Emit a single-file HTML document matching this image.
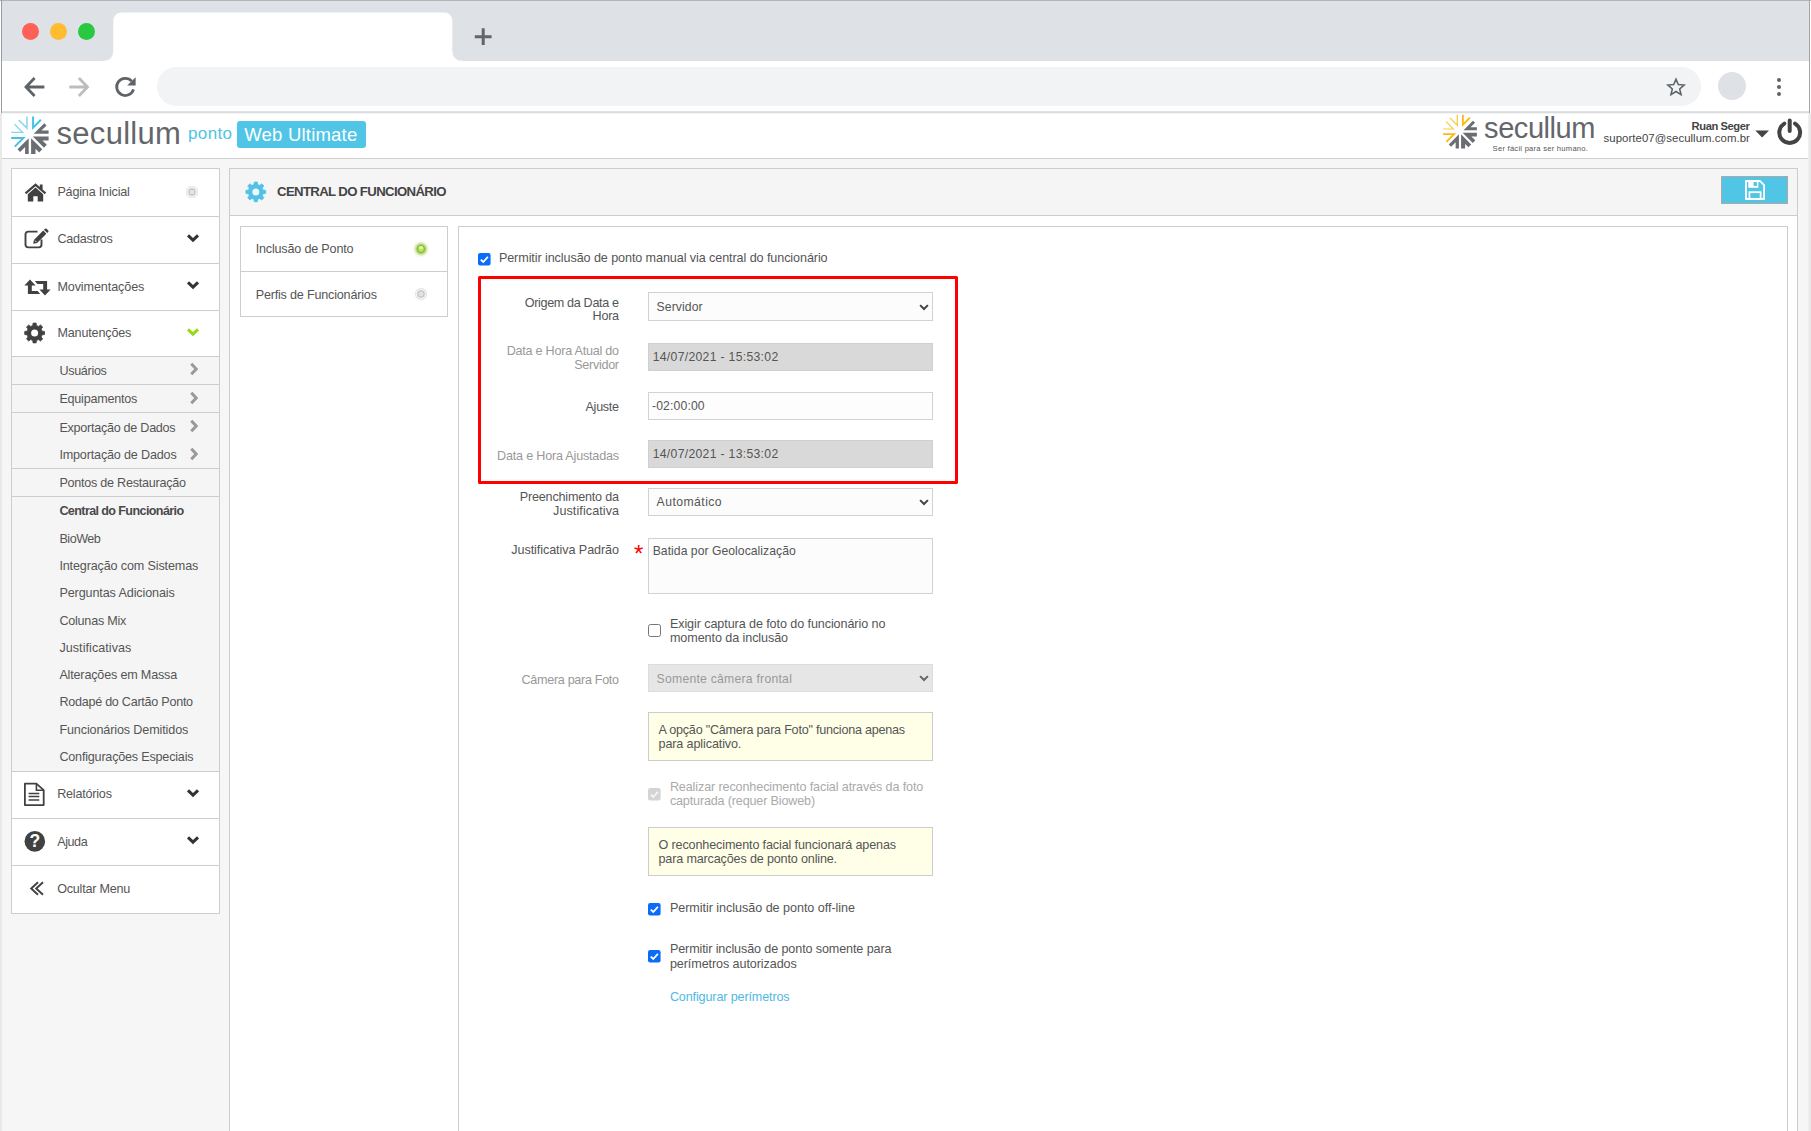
<!DOCTYPE html>
<html lang="pt-BR"><head><meta charset="utf-8"><title>Central do Funcionário</title>
<style>
html,body{margin:0;padding:0;}
body{width:1811px;height:1131px;position:relative;overflow:hidden;background:#fff;font-family:"Liberation Sans",sans-serif;}
.b{position:absolute;box-sizing:border-box;display:block;}
.t{position:absolute;white-space:nowrap;margin:0;padding:0;}
</style></head><body>
<div class="b" style="left:0px;top:0px;width:1811px;height:1131px;background:#fff;"></div>
<div class="b" style="left:2px;top:113px;width:1806px;height:1018px;background:#f6f6f6;"></div>
<div class="b" style="left:0px;top:113px;width:2px;height:1018px;background:#e9e9e9;"></div>
<div class="b" style="left:1808px;top:113px;width:1px;height:1018px;background:#f0f0f0;"></div>
<div class="b" style="left:1809px;top:113px;width:2px;height:1018px;background:#e9e9e9;"></div>
<div class="b" style="left:2px;top:1px;width:1807px;height:60px;background:#dee1e6;"></div>
<div class="b" style="left:0px;top:0px;width:1811px;height:1px;background:#b3b5b9;"></div>
<div class="b" style="left:1px;top:0px;width:1px;height:113px;background:#9a9c9f;"></div>
<div class="b" style="left:1809px;top:0px;width:1px;height:113px;background:#a2a4a8;"></div>
<svg class="b" style="left:100px;top:12px" width="370" height="49" viewBox="100 12 370 49"><path d="M103.3 60.8 Q113.3 60.8 113.3 50.8 L113.3 21.4 Q113.3 12.4 122.3 12.4 L443.3 12.4 Q452.3 12.4 452.3 21.4 L452.3 50.8 Q452.3 60.8 462.3 60.8 L462.3 61 L103.3 61 Z" fill="#fff"/></svg>
<svg class="b" style="left:470px;top:24px" width="26" height="26" viewBox="470 24 26 26"><path d="M483.2 28.3V45M474.8 36.65H491.6" stroke="#62666b" stroke-width="3" fill="none"/></svg>
<div class="b" style="left:22px;top:22.5px;width:17px;height:17px;border-radius:50%;background:#fe5f57;"></div>
<div class="b" style="left:50px;top:22.5px;width:17px;height:17px;border-radius:50%;background:#febc2e;"></div>
<div class="b" style="left:78px;top:22.5px;width:17px;height:17px;border-radius:50%;background:#28c840;"></div>
<div class="b" style="left:2px;top:61px;width:1807px;height:51px;background:#fff;"></div>
<div class="b" style="left:2px;top:111px;width:1807px;height:2px;background:linear-gradient(#e4e6e9,#d4d7db);"></div>
<svg class="b" style="left:20px;top:72px" width="125" height="30" viewBox="20 72 125 30"><path d="M44.4 87H26.6M34.6 78L26 87L34.6 96" stroke="#5f6368" stroke-width="2.8" fill="none"/><path d="M69.3 87H87M78.9 78L87.5 87L78.9 96" stroke="#bbbdbf" stroke-width="2.8" fill="none"/><path d="M131.69 81.15A8.6 8.6 0 1 0 133.52 89.41" stroke="#5f6368" stroke-width="2.8" fill="none"/><path d="M135.6 77.2V85.4H127.2Z" fill="#5f6368"/></svg>
<div class="b" style="left:157px;top:67px;width:1544px;height:39px;background:#f1f3f4;border-radius:19.5px;"></div>
<svg class="b" style="left:1665.2px;top:76px;" width="22" height="22" viewBox="0 0 22 22"><path transform="translate(11 11.3) scale(0.92) translate(-11 -11.3)" d="M11 2.6L13.5 8.4L19.8 8.9L15 13.1L16.5 19.2L11 15.9L5.5 19.2L7 13.1L2.2 8.9L8.5 8.4Z" stroke="#5f6368" stroke-width="1.7" fill="none" stroke-linejoin="miter"/></svg>
<div class="b" style="left:1717.5px;top:72px;width:28px;height:28px;border-radius:50%;background:#dee1e6;"></div>
<div class="b" style="left:1777px;top:78.0px;width:4.2px;height:4.2px;border-radius:50%;background:#5f6368;"></div>
<div class="b" style="left:1777px;top:84.80000000000001px;width:4.2px;height:4.2px;border-radius:50%;background:#5f6368;"></div>
<div class="b" style="left:1777px;top:91.60000000000001px;width:4.2px;height:4.2px;border-radius:50%;background:#5f6368;"></div>
<div class="b" style="left:2px;top:113.5px;width:1806px;height:45px;background:#fff;"></div>
<div class="b" style="left:2px;top:158px;width:1806px;height:1px;background:#cfcfcf;"></div>
<svg class="b" style="left:0;top:113px" width="60" height="45" viewBox="0 113 60 45"><path d="M32.10 129.99L32.10 116.60L34.10 116.60L34.10 125.16L40.15 119.11L41.57 120.52Z" fill="#45c1e6"/><path d="M33.76 133.70L44.25 123.21L46.52 125.47L41.49 130.50L48.60 130.50L48.60 133.70Z" fill="#6a6d71"/><path d="M32.80 136.50L48.60 136.50L48.60 140.50L42.45 140.50L46.80 144.85L43.97 147.67Z" fill="#6a6d71"/><path d="M31.10 138.20L42.27 149.37L39.16 152.48L35.50 148.82L35.50 154.00L31.10 154.00Z" fill="#6a6d71"/><path d="M28.70 138.20L28.70 154.00L25.10 154.00L25.10 146.89L20.07 151.92L17.53 149.37Z" fill="#6a6d71"/><path d="M25.80 137.00L15.48 147.32L14.06 145.91L20.97 139.00L11.20 139.00L11.20 137.00Z" fill="#45c1e6"/><path d="M24.11 132.90L11.20 132.90L11.20 131.65L21.09 131.65L14.10 124.66L14.98 123.77Z" fill="#86d6ee"/><path d="M27.70 129.99L18.23 120.52L19.29 119.46L26.20 126.37L26.20 116.60L27.70 116.60Z" fill="#86d6ee"/></svg>
<div class="t" style="left:56.60px;top:111.76px;font-size:31px;line-height:43px;color:#63666a;letter-spacing:0.268px;">secullum</div>
<div class="t" style="left:188.00px;top:122.11px;font-size:17px;line-height:24px;color:#4fc3e6;letter-spacing:0.365px;">ponto</div>
<div class="b" style="left:237px;top:121px;width:129px;height:26.6px;background:#50c5e6;border-radius:3px;"></div>
<div class="t" style="left:244.30px;top:121.69px;font-size:18.5px;line-height:26px;color:#fff;letter-spacing:0.201px;">Web Ultimate</div>
<svg class="b" style="left:1436px;top:113px" width="50" height="45" viewBox="1436 113 50 45"><path d="M1461.99 126.90L1461.99 114.80L1463.80 114.80L1463.80 122.54L1469.27 117.07L1470.54 118.34Z" fill="#fdb813"/><path d="M1463.49 130.25L1472.97 120.77L1475.02 122.82L1470.47 127.36L1476.90 127.36L1476.90 130.25Z" fill="#6a6d71"/><path d="M1462.62 132.78L1476.90 132.78L1476.90 136.40L1471.35 136.40L1475.27 140.33L1472.72 142.88Z" fill="#6a6d71"/><path d="M1461.08 134.32L1471.18 144.42L1468.37 147.23L1465.06 143.92L1465.06 148.60L1461.08 148.60Z" fill="#6a6d71"/><path d="M1458.92 134.32L1458.92 148.60L1455.66 148.60L1455.66 142.17L1451.12 146.72L1448.82 144.42Z" fill="#6a6d71"/><path d="M1456.29 133.24L1446.96 142.56L1445.69 141.29L1451.93 135.04L1443.10 135.04L1443.10 133.24Z" fill="#fdb813"/><path d="M1454.76 129.53L1443.10 129.53L1443.10 128.40L1452.04 128.40L1445.72 122.08L1446.52 121.28Z" fill="#fdca45"/><path d="M1458.01 126.90L1449.46 118.34L1450.41 117.39L1456.66 123.63L1456.66 114.80L1458.01 114.80Z" fill="#fdca45"/></svg>
<div class="t" style="left:1484.10px;top:108.35px;font-size:29px;line-height:41px;color:#63666a;letter-spacing:-0.447px;">secullum</div>
<div class="t" style="left:1492.60px;top:142.61px;font-size:7.6px;line-height:11px;color:#555;letter-spacing:0.251px;">Ser fácil para ser humano.</div>
<div class="t" style="left:1691.60px;top:118.10px;font-size:11.2px;line-height:16px;color:#444;letter-spacing:-0.427px;font-weight:bold;">Ruan Seger</div>
<div class="t" style="left:1603.60px;top:130.31px;font-size:11.4px;line-height:16px;color:#444;letter-spacing:0.047px;">suporte07@secullum.com.br</div>
<svg class="b" style="left:1755px;top:130px;" width="15" height="8" viewBox="0 0 15 8"><path d="M0.3 0.6H14L7.15 7.4Z" fill="#444"/></svg>
<svg class="b" style="left:1775px;top:117px;" width="30" height="30" viewBox="0 0 30 30"><path d="M9.3 6.6A10.4 10.4 0 1 0 20.1 6.6" stroke="#444" stroke-width="4" fill="none" stroke-linecap="round"/><path d="M14.7 3.4V14" stroke="#444" stroke-width="4" stroke-linecap="round"/></svg>
<div class="b" style="left:11px;top:168px;width:209px;height:746px;background:#fff;border:1px solid #cdcdcd;"></div>
<div class="b" style="left:12px;top:357px;width:207px;height:414px;background:#f5f5f5;"></div>
<div class="b" style="left:12px;top:216px;width:207px;height:1px;background:#cdcdcd;"></div>
<div class="b" style="left:12px;top:263px;width:207px;height:1px;background:#cdcdcd;"></div>
<div class="b" style="left:12px;top:310px;width:207px;height:1px;background:#cdcdcd;"></div>
<div class="b" style="left:12px;top:356px;width:207px;height:1px;background:#cdcdcd;"></div>
<div class="b" style="left:12px;top:384px;width:207px;height:1px;background:#cdcdcd;"></div>
<div class="b" style="left:12px;top:412px;width:207px;height:1px;background:#cdcdcd;"></div>
<div class="b" style="left:12px;top:468px;width:207px;height:1px;background:#cdcdcd;"></div>
<div class="b" style="left:12px;top:496px;width:207px;height:1px;background:#cdcdcd;"></div>
<div class="b" style="left:12px;top:771px;width:207px;height:1px;background:#cdcdcd;"></div>
<div class="b" style="left:12px;top:818px;width:207px;height:1px;background:#cdcdcd;"></div>
<div class="b" style="left:12px;top:865px;width:207px;height:1px;background:#cdcdcd;"></div>
<div class="t" style="left:57.40px;top:183.17px;font-size:12.6px;line-height:18px;color:#555;letter-spacing:-0.188px;">Página Inicial</div>
<div class="t" style="left:57.40px;top:230.37px;font-size:12.6px;line-height:18px;color:#555;letter-spacing:-0.241px;">Cadastros</div>
<div class="t" style="left:57.40px;top:277.67px;font-size:12.6px;line-height:18px;color:#555;letter-spacing:-0.103px;">Movimentações</div>
<div class="t" style="left:57.40px;top:324.47px;font-size:12.6px;line-height:18px;color:#555;letter-spacing:-0.165px;">Manutenções</div>
<div class="b" style="left:185px;top:184.8px;width:14px;height:14px;border-radius:50%;background:radial-gradient(circle closest-side,#e4e4e4 0,#e2e2e2 2.2px,#b9b9b9 3.1px,#e9e9e9 4px,#f4f4f4 4.6px,#e3e3e3 5.4px,rgba(255,255,255,0) 6.6px);"></div>
<svg class="b" style="left:185.8px;top:232.89999999999998px;" width="14" height="10" viewBox="0 0 14 10"><path d="M2 2.4L7 7.2L12 2.4" stroke="#333" stroke-width="3" fill="none"/></svg>
<svg class="b" style="left:185.8px;top:280.2px;" width="14" height="10" viewBox="0 0 14 10"><path d="M2 2.4L7 7.2L12 2.4" stroke="#333" stroke-width="3" fill="none"/></svg>
<svg class="b" style="left:185.8px;top:327.0px;" width="14" height="10" viewBox="0 0 14 10"><path d="M2 2.4L7 7.2L12 2.4" stroke="#96d91a" stroke-width="3" fill="none"/></svg>
<div class="t" style="left:59.40px;top:361.97px;font-size:12.6px;line-height:18px;color:#555;letter-spacing:-0.317px;">Usuários</div>
<div class="t" style="left:59.40px;top:390.27px;font-size:12.6px;line-height:18px;color:#555;letter-spacing:-0.232px;">Equipamentos</div>
<div class="t" style="left:59.40px;top:418.97px;font-size:12.6px;line-height:18px;color:#555;letter-spacing:-0.271px;">Exportação de Dados</div>
<div class="t" style="left:59.40px;top:446.07px;font-size:12.6px;line-height:18px;color:#555;letter-spacing:-0.171px;">Importação de Dados</div>
<div class="t" style="left:59.40px;top:474.27px;font-size:12.6px;line-height:18px;color:#555;letter-spacing:-0.254px;">Pontos de Restauração</div>
<svg class="b" style="left:189px;top:362px;" width="10" height="14" viewBox="0 0 10 14"><path d="M2.3 1.8L7.2 7L2.3 12.2" stroke="#999" stroke-width="3" fill="none"/></svg>
<svg class="b" style="left:189px;top:390.5px;" width="10" height="14" viewBox="0 0 10 14"><path d="M2.3 1.8L7.2 7L2.3 12.2" stroke="#999" stroke-width="3" fill="none"/></svg>
<svg class="b" style="left:189px;top:419px;" width="10" height="14" viewBox="0 0 10 14"><path d="M2.3 1.8L7.2 7L2.3 12.2" stroke="#999" stroke-width="3" fill="none"/></svg>
<svg class="b" style="left:189px;top:446.5px;" width="10" height="14" viewBox="0 0 10 14"><path d="M2.3 1.8L7.2 7L2.3 12.2" stroke="#999" stroke-width="3" fill="none"/></svg>
<div class="t" style="left:59.40px;top:502.27px;font-size:12.6px;line-height:18px;color:#4a4a4a;letter-spacing:-0.624px;font-weight:bold;">Central do Funcionário</div>
<div class="t" style="left:59.40px;top:529.67px;font-size:12.6px;line-height:18px;color:#555;letter-spacing:-0.478px;">BioWeb</div>
<div class="t" style="left:59.40px;top:556.87px;font-size:12.6px;line-height:18px;color:#555;letter-spacing:-0.144px;">Integração com Sistemas</div>
<div class="t" style="left:59.40px;top:584.27px;font-size:12.6px;line-height:18px;color:#555;letter-spacing:-0.115px;">Perguntas Adicionais</div>
<div class="t" style="left:59.40px;top:611.77px;font-size:12.6px;line-height:18px;color:#555;letter-spacing:-0.233px;">Colunas Mix</div>
<div class="t" style="left:59.40px;top:638.77px;font-size:12.6px;line-height:18px;color:#555;letter-spacing:0.044px;">Justificativas</div>
<div class="t" style="left:59.40px;top:666.27px;font-size:12.6px;line-height:18px;color:#555;letter-spacing:-0.180px;">Alterações em Massa</div>
<div class="t" style="left:59.40px;top:693.27px;font-size:12.6px;line-height:18px;color:#555;letter-spacing:-0.267px;">Rodapé do Cartão Ponto</div>
<div class="t" style="left:59.40px;top:720.77px;font-size:12.6px;line-height:18px;color:#555;letter-spacing:-0.126px;">Funcionários Demitidos</div>
<div class="t" style="left:59.40px;top:748.27px;font-size:12.6px;line-height:18px;color:#555;letter-spacing:-0.203px;">Configurações Especiais</div>
<div class="t" style="left:57.20px;top:785.27px;font-size:12.6px;line-height:18px;color:#555;letter-spacing:-0.214px;">Relatórios</div>
<div class="t" style="left:57.20px;top:832.67px;font-size:12.6px;line-height:18px;color:#555;letter-spacing:-0.432px;">Ajuda</div>
<div class="t" style="left:57.20px;top:879.67px;font-size:12.6px;line-height:18px;color:#555;letter-spacing:-0.230px;">Ocultar Menu</div>
<svg class="b" style="left:185.8px;top:787.8000000000001px;" width="14" height="10" viewBox="0 0 14 10"><path d="M2 2.4L7 7.2L12 2.4" stroke="#333" stroke-width="3" fill="none"/></svg>
<svg class="b" style="left:185.8px;top:835.2px;" width="14" height="10" viewBox="0 0 14 10"><path d="M2 2.4L7 7.2L12 2.4" stroke="#333" stroke-width="3" fill="none"/></svg>
<svg class="b" style="left:24px;top:181.5px;" width="23" height="21" viewBox="0 0 23 21"><path d="M11.5 1.2L0.8 10.6L2.2 12.2L11.5 4.2L20.8 12.2L22.2 10.6L18.6 7.4V2.4H15.8V5Z" fill="#414141"/><path d="M11.5 5.6L3.8 12.2V19.6H9.3V14.2H13.7V19.6H19.2V12.2Z" fill="#414141"/></svg>
<svg class="b" style="left:24px;top:228px;" width="25" height="21" viewBox="0 0 25 21"><path d="M17.5 11.5V16.6Q17.5 19.4 14.7 19.4H4.3Q1.5 19.4 1.5 16.6V6.4Q1.5 3.6 4.3 3.6H13.5" stroke="#414141" stroke-width="1.9" fill="none"/><path d="M9.2 15.8L9.9 11.9L19.2 2.6L22.4 5.8L13.1 15.1Z" fill="#414141"/><path d="M20 1.8L21 0.8Q21.8 0 22.6 0.8L24.2 2.4Q25 3.2 24.2 4L23.2 5Z" fill="#414141"/><path d="M11 12.6L12.4 14" stroke="#fff" stroke-width="0.9"/></svg>
<svg class="b" style="left:24px;top:278.5px;" width="27" height="17" viewBox="0 0 27 17"><path d="M6 0.4L0.4 6.6H3.9V15H16.2L13.6 12H7.8V6.6H11.6Z" fill="#414141"/><path d="M21 16.6L26.6 10.4H23.1V2H10.8L13.4 5H19.2V10.4H15.4Z" fill="#414141"/></svg>
<svg class="b" style="left:20px;top:320px" width="28" height="26" viewBox="20 320 28 26"><path d="M32.80 325.51L33.04 323.12L36.16 323.12L36.40 325.51L38.62 326.43L40.48 324.91L42.69 327.12L41.17 328.98L42.09 331.20L44.48 331.44L44.48 334.56L42.09 334.80L41.17 337.02L42.69 338.88L40.48 341.09L38.62 339.57L36.40 340.49L36.16 342.88L33.04 342.88L32.80 340.49L30.58 339.57L28.72 341.09L26.51 338.88L28.03 337.02L27.11 334.80L24.72 334.56L24.72 331.44L27.11 331.20L28.03 328.98L26.51 327.12L28.72 324.91L30.58 326.43Z" fill="#414141" stroke="#414141" stroke-width="0.8" stroke-linejoin="round"/><circle cx="34.6" cy="333" r="3.5" fill="#fff"/></svg>
<svg class="b" style="left:23.4px;top:782px;" width="23" height="25" viewBox="0 0 23 25"><path d="M1.9 1.7H13.4L20.7 8.2V23.1H1.9Z" stroke="#414141" stroke-width="1.8" fill="none" stroke-linejoin="round"/><path d="M13.4 1.9V8.2H20.5" stroke="#414141" stroke-width="1.6" fill="none"/><path d="M5.6 11.4H16.3M5.6 14.6H16.3M5.6 17.9H16.3" stroke="#414141" stroke-width="1.5"/></svg>
<svg class="b" style="left:24px;top:831px" width="22" height="22" viewBox="0 0 22 22"><circle cx="10.8" cy="10.4" r="10.3" fill="#414141"/><text x="10.8" y="16.4" text-anchor="middle" font-family="Liberation Sans, sans-serif" font-weight="bold" font-size="17.5" fill="#fff">?</text></svg>
<svg class="b" style="left:29px;top:881px;" width="16" height="15" viewBox="0 0 16 15"><path d="M9 1.2L2.2 7.5L9 13.8M14 1.2L7.2 7.5L14 13.8" stroke="#414141" stroke-width="1.9" fill="none"/></svg>
<div class="b" style="left:229px;top:168px;width:1569px;height:980px;background:#fff;border:1px solid #cdcdcd;"></div>
<div class="b" style="left:230px;top:169px;width:1567px;height:46px;background:#f5f5f5;"></div>
<div class="b" style="left:230px;top:215px;width:1567px;height:1px;background:#cdcdcd;"></div>
<svg class="b" style="left:243px;top:179px" width="26" height="26" viewBox="243 179 26 26"><path d="M254.03 184.51L254.24 182.02L257.36 182.02L257.57 184.51L259.77 185.42L261.68 183.81L263.89 186.02L262.28 187.93L263.19 190.13L265.68 190.34L265.68 193.46L263.19 193.67L262.28 195.87L263.89 197.78L261.68 199.99L259.77 198.38L257.57 199.29L257.36 201.78L254.24 201.78L254.03 199.29L251.83 198.38L249.92 199.99L247.71 197.78L249.32 195.87L248.41 193.67L245.92 193.46L245.92 190.34L248.41 190.13L249.32 187.93L247.71 186.02L249.92 183.81L251.83 185.42Z" fill="#4fc3e6" stroke="#4fc3e6" stroke-width="0.8" stroke-linejoin="round"/><circle cx="255.8" cy="191.9" r="3.5" fill="#f5f5f5"/></svg>
<div class="t" style="left:277.00px;top:183.31px;font-size:13.2px;line-height:18px;color:#444;letter-spacing:-0.637px;font-weight:bold;">CENTRAL DO FUNCIONÁRIO</div>
<div class="b" style="left:1721px;top:176px;width:67px;height:28px;background:#50c5e6;border:1px solid #b0a8a5;"></div>
<svg class="b" style="left:1744.75px;top:179.9px" width="20.2" height="20.2" viewBox="0 0 20.2 20.2"><path d="M0.95 0.95H14.9L19.15 5.2V19.05H0.95Z" stroke="#fff" stroke-width="1.9" fill="none" stroke-linejoin="round"/><rect x="3.3" y="1.2" width="10.1" height="6.6" rx="0.6" fill="#fff"/><rect x="8.6" y="2.1" width="3.3" height="4" rx="0.4" fill="#50c5e6"/><rect x="4.45" y="12.2" width="11.2" height="7" stroke="#fff" stroke-width="1.8" fill="none"/></svg>
<div class="b" style="left:240px;top:226px;width:208px;height:91px;background:#fff;border:1px solid #cdcdcd;"></div>
<div class="b" style="left:241px;top:271px;width:206px;height:1px;background:#cdcdcd;"></div>
<div class="t" style="left:255.70px;top:240.47px;font-size:12.6px;line-height:18px;color:#555;letter-spacing:-0.186px;">Inclusão de Ponto</div>
<div class="t" style="left:255.70px;top:285.87px;font-size:12.6px;line-height:18px;color:#555;letter-spacing:-0.193px;">Perfis de Funcionários</div>
<div class="b" style="left:411.9px;top:239.8px;width:18px;height:18px;border-radius:50%;background:radial-gradient(circle closest-side,#b9ea5c 0,#b3e552 2.4px,#8db63c 3.5px,#a9cf6a 4.3px,#c4dd9c 5.2px,rgba(214,235,170,.7) 6.2px,rgba(235,245,215,.4) 7.5px,rgba(255,255,255,0) 9px);"></div>
<div class="b" style="left:418.7px;top:245.8px;width:4.4px;height:3px;border-radius:50%;background:rgba(255,255,255,.55);filter:blur(.6px);"></div>
<div class="b" style="left:413.9px;top:287.2px;width:14px;height:14px;border-radius:50%;background:radial-gradient(circle closest-side,#e4e4e4 0,#e2e2e2 2.2px,#b9b9b9 3.1px,#e9e9e9 4px,#f4f4f4 4.6px,#e3e3e3 5.4px,rgba(255,255,255,0) 6.6px);"></div>
<div class="b" style="left:458px;top:226px;width:1330px;height:930px;background:#fff;border:1px solid #cdcdcd;"></div>
<svg class="b" style="left:478px;top:253px;" width="12.6" height="12.6" viewBox="0 0 13 13"><rect x="0" y="0" width="13" height="13" rx="2.2" fill="#0b6cf7"/><path d="M2.9 6.8L5.4 9.3L10.2 3.9" stroke="#fff" stroke-width="1.9" fill="none"/></svg>
<div class="t" style="left:498.90px;top:249.47px;font-size:12.6px;line-height:18px;color:#555;letter-spacing:-0.088px;">Permitir inclusão de ponto manual via central do funcionário</div>
<div class="b" style="left:478px;top:276px;width:480px;height:208px;border:3px solid #f00;border-radius:1.5px;"></div>
<div class="t" style="left:524.70px;top:293.67px;font-size:12.6px;line-height:18px;color:#555;letter-spacing:-0.336px;">Origem da Data e</div>
<div class="t" style="left:592.60px;top:307.47px;font-size:12.6px;line-height:18px;color:#555;letter-spacing:-0.270px;">Hora</div>
<div class="b" style="left:648px;top:292px;width:285px;height:29px;background:#fcfcfc;border:1px solid #d2d2d2;"></div>
<div class="t" style="left:656.60px;top:298.95px;font-size:12.2px;line-height:17px;color:#555;letter-spacing:0.082px;">Servidor</div>
<svg class="b" style="left:917.7px;top:302.5px;" width="12" height="9" viewBox="0 0 12 9"><path d="M2.1 2.1L6 6L9.9 2.1" stroke="#444" stroke-width="2" fill="none"/></svg>
<div class="t" style="left:506.70px;top:342.47px;font-size:12.6px;line-height:18px;color:#999;letter-spacing:-0.241px;">Data e Hora Atual do</div>
<div class="t" style="left:574.20px;top:356.27px;font-size:12.6px;line-height:18px;color:#999;letter-spacing:-0.288px;">Servidor</div>
<div class="b" style="left:648px;top:343px;width:285px;height:28px;background:#d9d9d9;border:1px solid #cfcfcf;"></div>
<div class="t" style="left:652.70px;top:349.45px;font-size:12.2px;line-height:17px;color:#555;letter-spacing:0.310px;">14/07/2021 - 15:53:02</div>
<div class="t" style="left:585.50px;top:398.37px;font-size:12.6px;line-height:18px;color:#555;letter-spacing:-0.284px;">Ajuste</div>
<div class="b" style="left:648px;top:392px;width:285px;height:28px;background:#fdfdfd;border:1px solid #d2d2d2;"></div>
<div class="t" style="left:652.00px;top:398.45px;font-size:12.2px;line-height:17px;color:#555;letter-spacing:0.143px;">-02:00:00</div>
<div class="t" style="left:497.10px;top:446.77px;font-size:12.6px;line-height:18px;color:#999;letter-spacing:-0.204px;">Data e Hora Ajustadas</div>
<div class="b" style="left:648px;top:440px;width:285px;height:28px;background:#d9d9d9;border:1px solid #cfcfcf;"></div>
<div class="t" style="left:652.70px;top:446.45px;font-size:12.2px;line-height:17px;color:#555;letter-spacing:0.310px;">14/07/2021 - 13:53:02</div>
<div class="t" style="left:519.80px;top:488.17px;font-size:12.6px;line-height:18px;color:#555;letter-spacing:-0.198px;">Preenchimento da</div>
<div class="t" style="left:553.00px;top:502.37px;font-size:12.6px;line-height:18px;color:#555;letter-spacing:0.081px;">Justificativa</div>
<div class="b" style="left:648px;top:488px;width:285px;height:28px;background:#fcfcfc;border:1px solid #d2d2d2;"></div>
<div class="t" style="left:656.60px;top:494.45px;font-size:12.2px;line-height:17px;color:#555;letter-spacing:0.452px;">Automático</div>
<svg class="b" style="left:917.7px;top:498.0px;" width="12" height="9" viewBox="0 0 12 9"><path d="M2.1 2.1L6 6L9.9 2.1" stroke="#444" stroke-width="2" fill="none"/></svg>
<div class="t" style="left:511.30px;top:541.27px;font-size:12.6px;line-height:18px;color:#555;letter-spacing:-0.077px;">Justificativa Padrão</div>
<div class="t" style="left:634.00px;top:536.58px;font-size:24px;line-height:34px;color:#f00;letter-spacing:0.000px;">*</div>
<div class="b" style="left:648px;top:538px;width:285px;height:56px;background:#fcfcfc;border:1px solid #d2d2d2;"></div>
<div class="t" style="left:652.70px;top:543.05px;font-size:12.2px;line-height:17px;color:#555;letter-spacing:0.032px;">Batida por Geolocalização</div>
<div class="b" style="left:648.2px;top:624.2px;width:12.6px;height:12.6px;border:1px solid #767676;border-radius:2.5px;background:#fff;"></div>
<div class="t" style="left:669.90px;top:615.07px;font-size:12.6px;line-height:18px;color:#555;letter-spacing:-0.093px;">Exigir captura de foto do funcionário no</div>
<div class="t" style="left:669.90px;top:629.47px;font-size:12.6px;line-height:18px;color:#555;letter-spacing:-0.082px;">momento da inclusão</div>
<div class="t" style="left:521.60px;top:671.47px;font-size:12.6px;line-height:18px;color:#999;letter-spacing:-0.316px;">Câmera para Foto</div>
<div class="b" style="left:648px;top:664.3px;width:285px;height:28px;background:#e6e6e6;border:1px solid #ddd;"></div>
<div class="t" style="left:656.60px;top:670.75px;font-size:12.2px;line-height:17px;color:#999;letter-spacing:0.247px;">Somente câmera frontal</div>
<svg class="b" style="left:917.7px;top:674.3px;" width="12" height="9" viewBox="0 0 12 9"><path d="M2.1 2.1L6 6L9.9 2.1" stroke="#666" stroke-width="2" fill="none"/></svg>
<div class="b" style="left:648px;top:712px;width:285px;height:48.5px;background:#ffffe8;border:1px solid #ccc;"></div>
<div class="t" style="left:658.50px;top:720.77px;font-size:12.6px;line-height:18px;color:#555;letter-spacing:-0.230px;">A opção "Câmera para Foto" funciona apenas</div>
<div class="t" style="left:658.50px;top:735.17px;font-size:12.6px;line-height:18px;color:#555;letter-spacing:-0.123px;">para aplicativo.</div>
<svg class="b" style="left:648.2px;top:788px;" width="12.6" height="12.6" viewBox="0 0 13 13"><rect x="0" y="0" width="13" height="13" rx="2.2" fill="#d4d4d4"/><path d="M2.9 6.8L5.4 9.3L10.2 3.9" stroke="#f4f4f4" stroke-width="1.9" fill="none"/></svg>
<div class="t" style="left:669.90px;top:778.07px;font-size:12.6px;line-height:18px;color:#aaa;letter-spacing:-0.123px;">Realizar reconhecimento facial através da foto</div>
<div class="t" style="left:669.90px;top:792.07px;font-size:12.6px;line-height:18px;color:#aaa;letter-spacing:-0.162px;">capturada (requer Bioweb)</div>
<div class="b" style="left:648px;top:827.3px;width:285px;height:48.5px;background:#ffffe8;border:1px solid #ccc;"></div>
<div class="t" style="left:658.50px;top:835.57px;font-size:12.6px;line-height:18px;color:#555;letter-spacing:-0.134px;">O reconhecimento facial funcionará apenas</div>
<div class="t" style="left:658.50px;top:850.07px;font-size:12.6px;line-height:18px;color:#555;letter-spacing:-0.161px;">para marcações de ponto online.</div>
<svg class="b" style="left:648.2px;top:903px;" width="12.6" height="12.6" viewBox="0 0 13 13"><rect x="0" y="0" width="13" height="13" rx="2.2" fill="#0b6cf7"/><path d="M2.9 6.8L5.4 9.3L10.2 3.9" stroke="#fff" stroke-width="1.9" fill="none"/></svg>
<div class="t" style="left:669.90px;top:899.47px;font-size:12.6px;line-height:18px;color:#555;letter-spacing:-0.046px;">Permitir inclusão de ponto off-line</div>
<svg class="b" style="left:648.2px;top:950px;" width="12.6" height="12.6" viewBox="0 0 13 13"><rect x="0" y="0" width="13" height="13" rx="2.2" fill="#0b6cf7"/><path d="M2.9 6.8L5.4 9.3L10.2 3.9" stroke="#fff" stroke-width="1.9" fill="none"/></svg>
<div class="t" style="left:669.90px;top:940.07px;font-size:12.6px;line-height:18px;color:#555;letter-spacing:-0.119px;">Permitir inclusão de ponto somente para</div>
<div class="t" style="left:669.90px;top:954.57px;font-size:12.6px;line-height:18px;color:#555;letter-spacing:-0.089px;">perímetros autorizados</div>
<div class="t" style="left:669.90px;top:987.87px;font-size:12.6px;line-height:18px;color:#4fb9e2;letter-spacing:-0.137px;">Configurar perímetros</div>
</body></html>
